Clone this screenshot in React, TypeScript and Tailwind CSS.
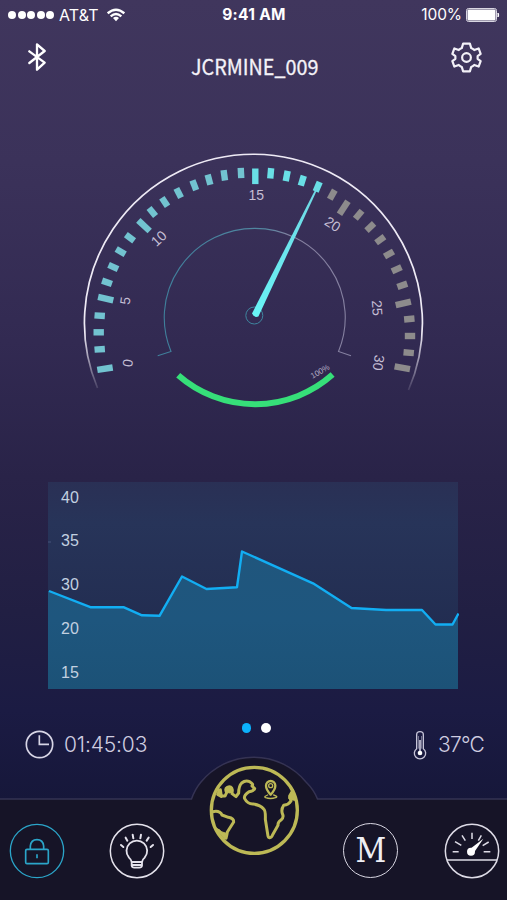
import React from "react";

// x, y, rotation, major tick
const ticks: [number, number, number, boolean][] = [
    [105, 368.7, -9, true],
    [99.7, 349.3, -4, false],
    [98.7, 332.3, 0, false],
    [99.7, 315.7, 4, false],
    [105.7, 298.7, 13, true],
    [107, 282.3, 19, false],
    [113.3, 267, 24, false],
    [120.7, 251.7, 30, false],
    [130, 237.7, 37, false],
    [144, 225.7, 43, true],
    [152.3, 212, 51, false],
    [164.7, 202, 57, false],
    [178.7, 193, 63, false],
    [194.3, 185.3, 69, false],
    [209, 179.7, 75, false],
    [224.3, 175.3, 82, false],
    [241, 173, 87, false],
    [255.3, 176.3, 90, true],
    [270.7, 173.3, 95, false],
    [286.7, 176, 101, false],
    [302.3, 180.7, 107, false],
    [317.7, 186.7, 113, false],
    [332.3, 194.7, 119, false],
    [343.7, 207.7, 123, true],
    [358.7, 214.7, 130, false],
    [370.3, 227, 137, false],
    [380.3, 239.7, 144, false],
    [389, 254, 150, false],
    [396.7, 269.3, 156, false],
    [402.3, 285.3, 161, false],
    [403.3, 303.3, 167, true],
    [409.3, 319, 175, false],
    [410, 336, 180, false],
    [408.7, 352.7, 185, false],
    [402.3, 367.7, 190, true],
]

const tickLabels = [
    { text: "0", x: 127.5, y: 363, rotate: -82 },
    { text: "5", x: 125, y: 300.7, rotate: -82 },
    { text: "10", x: 158.7, y: 238.3, rotate: -43 },
    { text: "15", x: 256.3, y: 195, rotate: 0 },
    { text: "20", x: 332.7, y: 224, rotate: 33 },
    { text: "25", x: 377.3, y: 308, rotate: 86 },
    { text: "30", x: 378.7, y: 362.7, rotate: 99 },
]

function tickColor(index: number) {
    if (index > 21) return "#8d8b8c"
    if (index > 16) return "#69dfe6"
    return "#72c3d0"
}

function StatusBar() {
    return (
        <div className="flex h-[30px] items-center justify-between pl-[8px] pr-[7px] text-white">
            <div className="flex w-[200px] items-center">
                <div className="flex gap-[1.5px]">
                    {[0, 1, 2, 3, 4].map(dot => <span key={dot} className="size-[8px] rounded-full bg-white"></span>)}
                </div>
                <span className="ml-[5px] w-[40px] font-[Inter,sans-serif] text-[16px] tracking-[0.1px]">AT&amp;T</span>
                <svg viewBox="0 0 54 40" className="ml-[8px] h-[14px] w-[18px]" fill="none" stroke="white" strokeWidth="7">
                    <path d="M2 15Q27 -7 52 15" />
                    <path d="M11 24Q27 10 43 24" />
                    <path d="M18 29Q27 22 36 29L27 39Z" fill="white" stroke="none" />
                </svg>
            </div>
            <span className="font-[Inter,sans-serif] text-[15.5px] font-bold tracking-[0.3px]">9:41 AM</span>
            <div className="flex w-[200px] items-center justify-end">
                <span className="font-[Inter,sans-serif] text-[15.5px] tracking-[-0.1px]">100%</span>
                <svg viewBox="0 0 34 14" className="ml-[4px] h-[14px] w-[34px]">
                    <rect x="0.5" y="0.5" width="30" height="13" rx="2" fill="none" stroke="#d9d6e2" />
                    <rect x="1.500" y="1.500" width="28" height="11" rx="1" fill="white" />
                    <path d="M32 5Q33.500 7 32 9Z" fill="white" stroke="white" />
                </svg>
            </div>
        </div>
    )
}

function Header() {
    return (
        <header className="flex h-[60px] items-start justify-between pl-[28px] pr-[25px]">
            <svg viewBox="0 0 54 90" className="mt-[12px] h-[30px] w-[60px]" preserveAspectRatio="xMinYMin" fill="none" stroke="white" strokeWidth="7" strokeLinejoin="round" strokeLinecap="round">
                <path d="M4 28L50 62L27 83V7L50 27L4 63" />
            </svg>
            <h1 className="mt-[20px] scale-x-[0.94] font-['Noto_Sans_CJK_SC',sans-serif] text-[21px] leading-[32px] text-[#f4f2f8] [-webkit-text-stroke:0.3px_#f4f2f8]">JCRMINE_009</h1>
            <div className="flex w-[60px] justify-end">
                <svg viewBox="-46 -46 92 92" className="mt-[12px] size-[31px]" fill="none" stroke="#f3f1f8" strokeWidth="6.5" strokeLinejoin="round">
                    <path d="M-10 -41H10L14 -28Q19 -26 23 -22L36 -27L42 -11L33 -4V4L42 11L36 27L23 22Q19 26 14 28L10 41H-10L-14 28Q-19 26 -23 22L-36 27L-42 11L-33 4V-4L-42 -11L-36 -27L-23 -22Q-19 -26 -14 -28Z" />
                    <circle r="13" />
                </svg>
            </div>
        </header>
    )
}

function Gauge() {
    return (
        <svg viewBox="75 140 360 280" className="ml-[75px] mt-[50px] h-[280px] w-[360px] shrink-0" fill="none">
            <defs>
                <linearGradient id="rim" x1="0" y1="153" x2="0" y2="391" gradientUnits="userSpaceOnUse">
                    <stop offset="0.75" stopColor="#eeeaf5" />
                    <stop offset="1" stopColor="#eeeaf5" stopOpacity="0.1" />
                </linearGradient>
                <linearGradient id="dial" x1="165" y1="0" x2="345" y2="0" gradientUnits="userSpaceOnUse">
                    <stop offset="0" stopColor="#3f7f9b" />
                    <stop offset="0.55" stopColor="#5286a0" />
                    <stop offset="0.7" stopColor="#8580a0" />
                    <stop offset="1" stopColor="#8580a0" />
                </linearGradient>
                <linearGradient id="needle" x1="0" y1="187" x2="0" y2="316" gradientUnits="userSpaceOnUse">
                    <stop offset="0" stopColor="#6fd8e4" />
                    <stop offset="1" stopColor="#69f4f6" />
                </linearGradient>
            </defs>
            <path d="M97.5 388A169 168.7 0 1 1 408.5 390" stroke="url(#rim)" strokeWidth="1.7" />
            {ticks.map(([x, y, angle, major], i) => (
                <rect
                    key={i}
                    x={major ? -7.8 : -5.2}
                    y={-3.2}
                    width={major ? 15.6 : 10.4}
                    height={6.4}
                    fill={tickColor(i)}
                    transform={`translate(${x} ${y}) rotate(${angle})`}
                />
            ))}
            {tickLabels.map(label => (
                <text
                    key={label.text}
                    transform={`translate(${label.x} ${label.y}) rotate(${label.rotate})`}
                    y="5"
                    textAnchor="middle"
                    className="fill-[#c5bed4] font-['Liberation_Sans',sans-serif] text-[14px]"
                >
                    {label.text}
                </text>
            ))}
            <path d="M157.7 355.7L171 351.5A90.5 89.3 0 1 1 338.5 351.5L351 355.7" stroke="url(#dial)" strokeWidth="1.1" />
            <circle cx="254.3" cy="315.5" r="8.5" stroke="#3f86a0" />
            <path d="M252 313.5L316.6 187L318.2 187.6L258.4 316.5Q254 318 252 313.5Z" fill="url(#needle)" />
            <path d="M178.2 375.300A116.5 116.5 0 0 0 332.6 374.6" stroke="#36df79" strokeWidth="6" />
            <text transform="translate(320 371.3) rotate(-30)" y="2.8" textAnchor="middle" className="fill-[#b3abc3] font-['Liberation_Sans',sans-serif] text-[8px]">100%</text>
        </svg>
    )
}

function Chart() {
    return (
        <div className="relative ml-[48px] mt-[62px] h-[207px] w-[411px] shrink-0">
            <svg viewBox="48 482 411 207" className="h-[207px] w-[411px]">
                <defs>
                    <linearGradient id="panel" x1="0" y1="0" x2="0" y2="1">
                        <stop offset="0" stopColor="#2a3055" />
                        <stop offset="0.2" stopColor="#273459" />
                        <stop offset="0.7" stopColor="#222d51" />
                    </linearGradient>
                    <linearGradient id="area" x1="0" y1="0" x2="0" y2="1">
                        <stop offset="0" stopColor="#20567d" />
                        <stop offset="0.5" stopColor="#1e567e" />
                        <stop offset="1" stopColor="#1c5277" />
                    </linearGradient>
                </defs>
                <rect x="48" y="482" width="410" height="207" fill="url(#panel)" />
                <path d="M48 591L91 607.3H124L142 615.3L159.5 615.8L182 576.5L206.5 589L237 587.2L242 551.5L313 583.3L351.5 608L386 610H422L435.5 624.5H452.5L458 614V689H48Z" fill="url(#area)" />
                <path d="M49 591L91 607.3H124L142 615.3L159.5 615.8L182 576.5L206.5 589L237 587.2L242 551.5L313 583.3L351.5 608L386 610H422L435.5 624.5H452.5L458.5 613.5" fill="none" stroke="#12aef3" strokeWidth="2.4" strokeLinejoin="round" />
                <path d="M48 542H51" stroke="#46537a" />
            </svg>
            <div className="absolute -top-[6.5px] left-[13px] flex flex-col font-['Liberation_Sans',sans-serif] text-[16px] leading-[43.8px] text-[#c2d0e0]">
                {["40", "35", "30", "20", "15"].map(value => <span key={value} className="h-[43.8px]">{value}</span>)}
            </div>
        </div>
    )
}

function Readings() {
    return (
        <>
            <div className="mt-[34px] flex h-[10px] shrink-0 justify-center gap-[10px] pl-[5px]">
                <span className="size-[9.5px] rounded-full bg-[#0cb1fb]"></span>
                <span className="size-[9.5px] rounded-full bg-white"></span>
            </div>
            <div className="flex h-[23px] shrink-0 items-center justify-between pl-[25px] pr-[23px] font-[Inter,sans-serif] font-light text-[#cfcde0]">
                <div className="flex items-center">
                    <svg viewBox="0 0 87 87" className="size-[29px]" fill="none" stroke="#d8d6e6" strokeWidth="5">
                        <circle cx="43.5" cy="43.5" r="39.5" />
                        <path d="M43 16V43H72" />
                    </svg>
                    <span className="ml-[10px] w-[84px] text-[21px] tracking-[-0.15px]">01:45:03</span>
                </div>
                <div className="flex items-center">
                    <svg viewBox="280 52 42 90" className="h-[30px] w-[14px]" fill="none" stroke="#c7c5d9" strokeWidth="4">
                        <path d="M291 108V66Q291 57 301 57Q311 57 311 66V108A17 17 0 1 1 291 108Z" />
                        <path d="M301 82V118" strokeWidth="5" />
                        <path d="M296.500 70V108M305.500 70V108" strokeWidth="1.500" />
                        <circle cx="301" cy="121" r="7" fill="#fff" stroke="none" />
                    </svg>
                    <span className="ml-[11px] text-[21px] tracking-[-0.8px]">37°C</span>
                </div>
            </div>
        </>
    )
}

function Globe() {
    return (
        <svg viewBox="0 0 330 330" className="absolute left-[200px] -top-[43px] size-[110px]" fill="none" stroke="#bdb956" strokeWidth="9" strokeLinejoin="round" strokeLinecap="round">
            <circle cx="163" cy="166" r="129" strokeWidth="10" />
            <path d="M55 105L64 123H75L80 113Q74 101 82 97Q95 92 97 105L96 116L108 125L116 114Q116 93 125 84Q136 75 149 80Q162 88 156 93L164 101Q160 108 147 110Q130 122 134 131Q143 148 160 147Q181 150 191 162Q197 166 196 193L203 237Q204 247 208 248Q215 249 218 239L234 211Q233 201 243 195Q252 188 248 178Q242 164 251 151Q266 149 273 138L269 123L278 107" />
            <path d="M53 118L64 124L61 104Z" fill="#bdb956" />
            <circle cx="88" cy="106" r="8" fill="#bdb956" strokeWidth="3" />
            <path d="M269 129L276 114L283 133Z" fill="#bdb956" />
            <path d="M38 170Q59 165 66 180L85 187Q102 190 101 201L82 231Q81 239 78 250M55 226L77 249" />
            <path d="M50 220L75 252L79 235Q64 233 50 220Z" fill="#bdb956" strokeWidth="3" />
            <path d="M212 119Q198 103 198 92A14 14 0 0 1 226 92Q226 103 212 119Z" strokeWidth="7" />
            <circle cx="212" cy="92" r="6" fill="#161428" strokeWidth="4" />
            <path d="M203 120Q190 125 197 128Q211 133 227 128Q236 125 221 120" strokeWidth="4" />
        </svg>
    )
}

function LockIcon() {
    return (
        <svg viewBox="-84 -84 168 168" className="size-[56px]" fill="none" stroke="#2ba5c9" strokeWidth="4">
            <circle r="80" />
            <rect x="-34" y="-5" width="68" height="43" rx="4" strokeWidth="5" />
            <path d="M-20 -5V-15Q-18 -34 0 -34T20 -15V-5M0 10V22" strokeWidth="5" />
        </svg>
    )
}

function BulbIcon() {
    return (
        <svg viewBox="-84 -84 168 168" className="size-[56px]" fill="none" stroke="#e4e2ec" strokeWidth="4.5" strokeLinecap="round">
            <circle r="80" />
            <path d="M-16 33Q-17 26 -24 20A31 31 0 1 1 23 20Q16 26 15 33ZM-16 34V44Q-15 50 -8 50H7Q14 50 15 44V34M-16 42H15" strokeWidth="5.500" />
            <path d="M-48 -18L-41 -12M-34 -40L-29 -31M-13 -49L-11 -38M12 -49L10 -38M35 -40L29 -31M48 -18L41 -12" strokeWidth="6" />
        </svg>
    )
}

function ModeIcon() {
    return (
        <div className="flex size-[55px] items-center justify-center rounded-full border-[1.5px] border-[#d9d7e3]">
            <span className="inline-block scale-x-[0.91] font-['DejaVu_Serif',serif] text-[33px] leading-[54px] text-[#eeeef4]">M</span>
        </div>
    )
}

function MeterIcon() {
    return (
        <svg viewBox="-84 -84 168 168" className="size-[56px]" fill="none" stroke="#dddbe6" strokeWidth="4.500">
            <circle r="80" />
            <path d="M-75 27H75M-58 2H-40M35 2H55M-51 -28L-32 -17M-30 -47L-20 -31M0 -55V-36M28 -47L19 -31M50 -27L32 -16" />
            <path d="M-6 -6L34 -37L5 6Z" fill="#fff" stroke="none" />
            <circle cx="-3" cy="2" r="12" fill="#fff" stroke="none" />
        </svg>
    )
}

function TabBar() {
    return (
        <nav className="relative mt-[42px] h-[102px] shrink-0">
            <svg viewBox="0 755 507 145" className="absolute left-0 -top-[43px] h-[145px] w-[507px]">
                <path d="M-2 799H191.500Q195 789 201 782A68 68 0 0 1 306 782Q314 790 317.500 799H509V902H-2Z" fill="#161427" stroke="#353353" strokeWidth="1.5" />
            </svg>
            <Globe />
            <div className="relative flex items-center pl-[9px] pt-[24.500px]">
                <LockIcon />
                <div className="ml-[44px]"><BulbIcon /></div>
                <div className="ml-[178px]"><ModeIcon /></div>
                <div className="ml-[46px]"><MeterIcon /></div>
            </div>
        </nav>
    )
}

export default function App() {
    return (
        <div className="flex h-[900px] w-[507px] flex-col overflow-hidden bg-[linear-gradient(180deg,#40365d_0%,#3b325a_18%,#322a52_38%,#292348_53%,#211f43_68%,#1b1b43_79%,#16173a_89%)]">
            <StatusBar />
            <Header />
            <Gauge />
            <Chart />
            <Readings />
            <TabBar />
        </div>
    )
}
